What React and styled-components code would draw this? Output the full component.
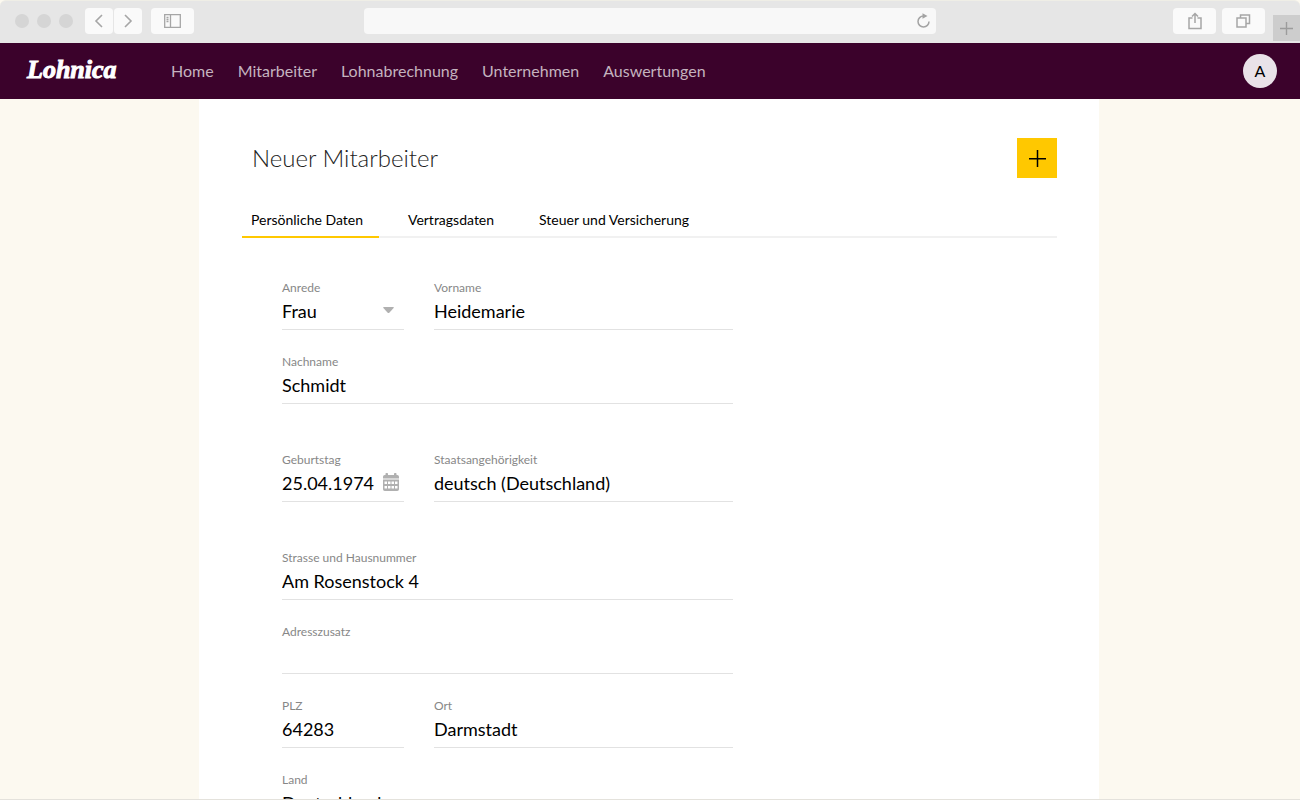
import React from 'react'
import styled, { createGlobalStyle } from 'styled-components'

const GlobalStyle = createGlobalStyle`
  * {
    box-sizing: border-box;
  }
  body {
    margin: 0;
    background: #fcf9f0;
    color: #000;
    font-family: Lato, 'Liberation Sans', sans-serif;
  }
  button,
  input,
  select {
    font: inherit;
    color: inherit;
  }
  button {
    border: 0;
    padding: 0;
    cursor: pointer;
  }
`

const Window = styled.div`
  height: 100vh;
  display: flex;
  flex-direction: column;
  overflow: hidden;
  border-bottom: 1px solid #e4e2dc;
`

const Chrome = styled.div`
  flex: none;
  display: flex;
  align-items: flex-start;
  height: 43px;
  padding-top: 7px;
  background: #e6e6e6;
  border-top: 1px solid #efeee6;
  border-radius: 6px 6px 0 0;
`

const Side = styled.div`
  flex: 1;
  display: flex;
  justify-content: ${({ $end }) => ($end ? 'flex-end' : 'flex-start')};
`

const Lights = styled.div`
  display: flex;
  align-items: center;
  gap: 8px;
  height: 26px;
  margin: 0 12px 0 15px;
`

const Light = styled.span`
  width: 14px;
  height: 14px;
  border-radius: 50%;
  background: #d5d5d5;
`

const ChromeButton = styled.button`
  display: flex;
  align-items: center;
  justify-content: center;
  width: ${({ $wide }) => ($wide ? 43 : 28)}px;
  height: 26px;
  margin-right: ${({ $gap = 0 }) => $gap}px;
  border-radius: 4px;
  background: #fafafa;
`

const AddressBar = styled.div`
  display: flex;
  align-items: center;
  width: 44%;
  height: 26px;
  padding-right: 5px;
  border-radius: 4px;
  background: #f8f8f8;
`

const Address = styled.input`
  flex: 1;
  min-width: 0;
  border: 0;
  outline: 0;
  padding: 0 8px;
  background: transparent;
`

const Reload = styled.button`
  display: flex;
  background: transparent;
`

const NewTab = styled.button`
  display: flex;
  align-items: center;
  justify-content: center;
  width: 27px;
  height: 26px;
  margin-top: 7px;
  background: #cdcdcd;
`

const Header = styled.header`
  flex: none;
  display: flex;
  align-items: center;
  height: 56px;
  padding: 0 23px 0 27px;
  background: #3b022b;
`

const Logo = styled.a`
  width: 144px;
  padding-bottom: 2px;
  color: #fff;
  font-family: 'Liberation Serif', serif;
  font-size: 26px;
  line-height: 28px;
  font-weight: 700;
  font-style: italic;
  text-decoration: none;
  -webkit-text-stroke: 1px #fff;
`

const Nav = styled.nav`
  display: flex;
  gap: 24px;
`

const NavLink = styled.a`
  color: #c4b3bf;
  font-size: 16px;
  line-height: 24px;
  text-decoration: none;
`

const Avatar = styled.button`
  width: 34px;
  height: 34px;
  margin-left: auto;
  padding-bottom: 2px;
  border-radius: 50%;
  background: #e9e2e8;
  font-size: 16px;
`

const Content = styled.div`
  flex: 1;
  min-height: 0;
  overflow-y: auto;
  padding-right: 2px;
  scrollbar-width: none;
`

const Sheet = styled.main`
  max-width: 900px;
  min-height: 100%;
  margin: 0 auto;
  padding: 39px 42px 48px 43px;
  background: #fff;
`

const TitleRow = styled.div`
  display: flex;
  align-items: center;
  justify-content: space-between;
  height: 40px;
  padding-left: 10px;
`

const Title = styled.h1`
  margin: 0;
  color: #222;
  font-size: 24px;
  line-height: 32px;
  font-weight: 300;
`

const AddButton = styled.button`
  display: flex;
  align-items: center;
  justify-content: center;
  width: 40px;
  height: 40px;
  background: #ffc800;
`

const Tabs = styled.div`
  display: flex;
  gap: 20px;
  margin-top: 24px;
  box-shadow: inset 0 -2px 0 #f1f1f1;
`

const Tab = styled.button`
  height: 36px;
  padding: 0 16px 0 9px;
  border-bottom: 2px solid ${({ $active }) => ($active ? '#ffc800' : 'transparent')};
  background: transparent;
  font-size: 14px;
`

const Form = styled.form`
  display: flex;
  flex-direction: column;
  gap: 48px;
  max-width: 451px;
  margin: 42px 0 0 40px;
`

const Group = styled.div`
  display: grid;
  grid-template-columns: 122px 1fr;
  gap: 24px 30px;
`

const FieldBox = styled.div`
  grid-column: ${({ $full }) => ($full ? '1 / -1' : 'auto')};
  min-width: 0;
`

const Label = styled.label`
  display: block;
  color: #878787;
  font-size: 12px;
  line-height: 16px;
`

const Control = styled.div`
  display: flex;
  align-items: center;
  height: 34px;
  padding-bottom: 4px;
  border-bottom: 1px solid #e2e2e2;
`

const Input = styled.input`
  flex: 1;
  min-width: 0;
  height: 28px;
  border: 0;
  outline: 0;
  padding: 0;
  background: transparent;
  font-size: 18px;
`

const Select = styled(Input)`
  appearance: none;
`

const PickerButton = styled.button`
  display: flex;
  margin-right: 5px;
  background: transparent;
`

const Arrow = styled.svg`
  margin-right: 10px;
  pointer-events: none;
`

const CalendarIcon = () => (
  <svg width="16" height="19" viewBox="0 0 16 19" fill="#b0b0b0">
    <path d="M2.500.8q0-.8.800-.8h.9q.8 0 .8.800V2h6V.8q0-.8.800-.8h.9q.8 0 .8.800V2h.7Q16 2 16 3.800V5.500H0V3.800Q0 2 1.800 2H2.500z" />
    <path
      fillRule="evenodd"
      d="M0 6.500h16v9.700q0 1.800-1.800 1.800H1.800Q0 18 0 16.200zM1.500 8.500v2.500H4V8.500zM5 8.500v2.500h2.500V8.500zM8.500 8.500v2.500H11V8.500zM12 8.500v2.500h2.500V8.500zM1.500 13v2.500H4V13zM5 13v2.500h2.500V13zM8.500 13v2.500H11V13zM12 13v2.500h2.500V13z"
    />
  </svg>
)

const Field = ({ id, label, full, value, children }) => (
  <FieldBox $full={full}>
    <Label htmlFor={id}>{label}</Label>
    <Control>
      {children || <Input id={id} defaultValue={value} />}
    </Control>
  </FieldBox>
)

const BrowserBar = () => (
  <Chrome>
    <Side>
      <Lights>
        <Light />
        <Light />
        <Light />
      </Lights>
      <ChromeButton $gap={1} aria-label="Zurück">
        <svg width="10" height="14" fill="none" stroke="#a6a6a6" strokeWidth="1.6">
          <path d="M8 1 2 7l6 6" />
        </svg>
      </ChromeButton>
      <ChromeButton $gap={9} aria-label="Vor">
        <svg width="10" height="14" fill="none" stroke="#a6a6a6" strokeWidth="1.6">
          <path d="m2 1 6 6-6 6" />
        </svg>
      </ChromeButton>
      <ChromeButton $wide aria-label="Seitenleiste">
        <svg width="17" height="14" fill="none" stroke="#a6a6a6" strokeWidth="1.3">
          <path d="M.7.7h15.600v12.600H.7zM6.500.7v12.600" />
          <path d="M2.500 3.500h2M2.500 5.500h2M2.500 7.500h2" />
        </svg>
      </ChromeButton>
    </Side>
    <AddressBar>
      <Address aria-label="Adresse" />
      <Reload aria-label="Neu laden">
        <svg width="15" height="16" fill="none" stroke="#a3a3a3" strokeWidth="1.5">
          <path d="M7.500 3a5.500 5.500 0 1 0 5.500 5.500" />
          <path d="m6.500.3 5 2.700-5 2.700z" fill="#a3a3a3" stroke="none" />
        </svg>
      </Reload>
    </AddressBar>
    <Side $end>
      <ChromeButton $wide $gap={6} aria-label="Teilen">
        <svg width="14" height="18" fill="none" stroke="#a6a6a6" strokeWidth="1.5">
          <path d="M4.500 6H1v10.500h12V6H9.500M7 11V1.500M4 4.500l3-3 3 3" />
        </svg>
      </ChromeButton>
      <ChromeButton $wide $gap={8} aria-label="Alle Tabs">
        <svg width="15" height="14" fill="none" stroke="#a6a6a6" strokeWidth="1.5">
          <path d="M1 4h9v9H1zM4.500 4V1H13.500v8.500H10" />
        </svg>
      </ChromeButton>
      <NewTab aria-label="Neuer Tab">
        <svg width="13" height="13" stroke="#9c9c9c" strokeWidth="1.4">
          <path d="M6.500 0v13M0 6.500h13" />
        </svg>
      </NewTab>
    </Side>
  </Chrome>
)

const navItems = ['Home', 'Mitarbeiter', 'Lohnabrechnung', 'Unternehmen', 'Auswertungen']
const tabs = ['Persönliche Daten', 'Vertragsdaten', 'Steuer und Versicherung']

const App = () => {
  const [active, setActive] = React.useState(tabs[0])

  return (
    <Window>
      <GlobalStyle />
      <BrowserBar />
      <Header>
        <Logo href="#">Lohnica</Logo>
        <Nav>
          {navItems.map(item => (
            <NavLink key={item} href="#">{item}</NavLink>
          ))}
        </Nav>
        <Avatar>A</Avatar>
      </Header>
      <Content>
        <Sheet>
          <TitleRow>
            <Title>Neuer Mitarbeiter</Title>
            <AddButton aria-label="Hinzufügen">
              <svg width="18" height="18" stroke="#000" strokeWidth="1.5">
                <path d="M9.500 1v17M1 9.800h17" />
              </svg>
            </AddButton>
          </TitleRow>
          <Tabs role="tablist">
            {tabs.map(tab => (
              <Tab
                key={tab}
                role="tab"
                aria-selected={tab === active}
                $active={tab === active}
                onClick={() => setActive(tab)}
              >
                {tab}
              </Tab>
            ))}
          </Tabs>
          <Form>
            <Group>
              <Field id="anrede" label="Anrede">
                <Select as="select" id="anrede" defaultValue="Frau">
                  <option>Frau</option>
                  <option>Herr</option>
                </Select>
                <Arrow width="11" height="7" fill="#b0b0b0">
                  <path d="M.8 0h9.400q1 0 .4.900L6.300 5.700q-.8.800-1.600 0L.4.900Q-.2 0 .8 0z" />
                </Arrow>
              </Field>
              <Field id="vorname" label="Vorname" value="Heidemarie" />
              <Field id="nachname" label="Nachname" value="Schmidt" full />
            </Group>
            <Group>
              <Field id="geburtstag" label="Geburtstag">
                <Input id="geburtstag" defaultValue="25.04.1974" />
                <PickerButton type="button" aria-label="Kalender">
                  <CalendarIcon />
                </PickerButton>
              </Field>
              <Field id="staat" label="Staatsangehörigkeit" value="deutsch (Deutschland)" />
            </Group>
            <Group>
              <Field id="strasse" label="Strasse und Hausnummer" value="Am Rosenstock 4" full />
              <Field id="zusatz" label="Adresszusatz" value="" full />
              <Field id="plz" label="PLZ" value="64283" />
              <Field id="ort" label="Ort" value="Darmstadt" />
              <Field id="land" label="Land" value="Deutschland" full />
            </Group>
          </Form>
        </Sheet>
      </Content>
    </Window>
  )
}

export default App
